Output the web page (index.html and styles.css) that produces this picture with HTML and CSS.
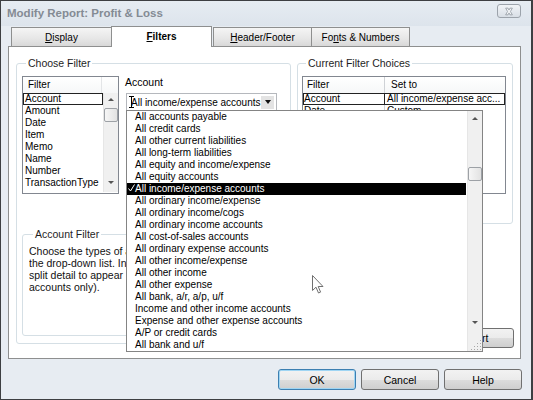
FILE: index.html
```html
<!DOCTYPE html>
<html lang="en">
<head>
  <meta charset="UTF-8" />
  <title>Modify Report: Profit &amp; Loss</title>
  <link rel="stylesheet" href="styles.css">
</head>
<body>
  <div class="window">
    <div class="titlebar">
      <span class="title">Modify Report: Profit &amp; Loss</span>
      <span class="close-btn">
        <svg width="23" height="13" viewBox="0 0 23 13">
          <path d="M8 3 L10.5 3 L11.5 5 L12.5 3 L15 3 L13 6.5 L15 10 L12.5 10 L11.5 8 L10.5 10 L8 10 L10 6.5 Z" fill="#f4f6f8" stroke="#8d949c" stroke-width="0.8"/>
        </svg>
      </span>
    </div>

    <div class="tabs">
      <div class="tab tab-display"><u>D</u>isplay</div>
      <div class="tab tab-filters active"><u>F</u>ilters</div>
      <div class="tab tab-header"><u>H</u>eader/Footer</div>
      <div class="tab tab-fonts">Fo<u>n</u>ts &amp; Numbers</div>
    </div>

    <div class="panel">
      <fieldset class="group choose-group">
        <legend>Choose Filter</legend>
        <div class="choose-row">
          <div class="listbox filter-list">
            <div class="list-head">
              <span class="head-cell">Filter</span>
              <span class="head-cell head-blank"></span>
            </div>
            <div class="list-body">
              <ul class="list-items">
                <li class="focused">Account</li>
                <li>Amount</li>
                <li>Date</li>
                <li>Item</li>
                <li>Memo</li>
                <li>Name</li>
                <li>Number</li>
                <li>TransactionType</li>
              </ul>
              <div class="vscroll small">
                <span class="arrow up"></span>
                <span class="thumb"></span>
                <span class="arrow down"></span>
              </div>
            </div>
          </div>

          <div class="account-field">
            <div class="field-label">Account</div>
            <div class="combo">
              <svg class="ibeam" width="5" height="12" viewBox="0 0 5 12"><path d="M0 0.5 H5 M2.5 0.5 V11.5 M0 11.5 H5" stroke="#000" stroke-width="1"/></svg>
              <span class="combo-text">All income/expense accounts</span>
              <span class="combo-btn"><span class="arrow down dark"></span></span>
            </div>
          </div>
        </div>

        <fieldset class="group filter-help">
          <legend>Account Filter</legend>
          <!-- the open drop-down hides the rest of this text -->
          <p class="help-text">Choose the types of accounts you want from<br>the drop-down list. Indicate whether you want<br>split detail to appear in the report (for all<br>accounts only).</p>
        </fieldset>
      </fieldset>

      <div class="right-col">
        <fieldset class="group current-group">
          <legend>Current Filter Choices</legend>
          <div class="listbox current-list">
            <div class="list-head">
              <span class="col-a">Filter</span>
              <span class="col-b">Set to</span>
            </div>
            <div class="crow selected">
              <span class="col-a">Account</span>
              <span class="col-b">All income/expense acc...</span>
            </div>
            <div class="crow">
              <span class="col-a">Date</span>
              <span class="col-b">Custom</span>
            </div>
          </div>
        </fieldset>
        <button class="btn revert-btn">Revert</button>
      </div>
    </div>

    <div class="footer">
      <button class="btn default-btn">OK</button>
      <button class="btn">Cancel</button>
      <button class="btn">Help</button>
    </div>

    <!-- open drop-down of the Account combo -->
    <div class="dropdown">
      <ul class="drop-items">
        <li>All accounts payable</li>
        <li>All credit cards</li>
        <li>All other current liabilities</li>
        <li>All long-term liabilities</li>
        <li>All equity and income/expense</li>
        <li>All equity accounts</li>
        <li class="checked"><svg class="check" width="7" height="8" viewBox="0 0 7 8"><path d="M0.5 4.5 L2.5 7 L6.5 0.5" fill="none" stroke="#fff" stroke-width="1"/></svg>All income/expense accounts</li>
        <li>All ordinary income/expense</li>
        <li>All ordinary income/cogs</li>
        <li>All ordinary income accounts</li>
        <li>All cost-of-sales accounts</li>
        <li>All ordinary expense accounts</li>
        <li>All other income/expense</li>
        <li>All other income</li>
        <li>All other expense</li>
        <li>All bank, a/r, a/p, u/f</li>
        <li>Income and other income accounts</li>
        <li>Expense and other expense accounts</li>
        <li>A/P or credit cards</li>
        <li>All bank and u/f</li>
      </ul>
      <div class="vscroll big">
        <span class="arrow up"></span>
        <span class="thumb"></span>
        <span class="arrow down"></span>
        <span class="grip"></span>
      </div>
    </div>

    <svg class="cursor" width="12" height="19" viewBox="0 0 12 19">
      <path d="M0.5 0.5 V15.5 L4 12.2 L6.5 18 L8.6 17.1 L6.2 11.5 H11 Z" fill="#fff" stroke="#707070" stroke-width="1"/>
    </svg>
  </div>
</body>
</html>
```

FILE: styles.css
```css
* {
  box-sizing: border-box;
}

body {
  margin: 0;
  width: 533px;
  height: 400px;
  overflow: hidden;
  font-family: "Liberation Sans", Arial, sans-serif;
  font-size: 10px;
  color: #000;
  background: #333;
}

.window {
  position: relative;
  width: 533px;
  height: 400px;
  border: 1px solid #3d3f42;
  border-right-width: 2px;
  background: #e7ecf2;
  display: flex;
  flex-direction: column;
}

/* title bar */
.titlebar {
  height: 25px;
  flex: 0 0 25px;
  display: flex;
  align-items: center;
  justify-content: space-between;
  padding: 0 10px 2px 6px;
  background: linear-gradient(#e6ecf2, #dde4ec);
}

.title {
  font-size: 11.5px;
  font-weight: bold;
  color: #848b94;
}

.close-btn {
  display: flex;
  width: 24px;
  height: 14px;
  margin-top: -3px;
  border: 1px solid #9ca3ab;
  border-radius: 3px;
  background: linear-gradient(#f1f4f7, #d9dfe6);
  align-items: center;
  justify-content: center;
}

/* tabs */
.tabs {
  height: 20px;
  flex: 0 0 20px;
  display: flex;
  align-items: flex-end;
  padding-left: 10px;
}

.tab {
  height: 19px;
  border: 1px solid #8e8f8f;
  border-bottom: none;
  border-right: none;
  background: linear-gradient(#f5f5f5, #e6e6e6 60%, #d8d8d8);
  display: flex;
  align-items: center;
  justify-content: center;
  padding-top: 1px;
}

.tab-display { width: 100px; }
.tab-filters { width: 101px; }
.tab-header { width: 98px; margin-left: 1px; }
.tab-fonts { width: 99px; border-right: 1px solid #8e8f8f; }

.tab.active {
  position: relative;
  z-index: 1;
  height: 21px;
  margin-bottom: -1px;
  background: #fff;
  border-right: 1px solid #8e8f8f;
  font-weight: bold;
  padding-bottom: 2px;
}

/* main panel */
.panel {
  flex: 0 0 313px;
  margin-left: 7px;
  width: 513px;
  background: #fff;
  border: 1px solid #8e8f8f;
  display: flex;
  padding: 10px 0 0 7px;
}

.group {
  margin: 0;
  border: 1px solid #d5dfe5;
  border-radius: 3px;
  padding: 0 5px;
  min-width: 0;
}

.group legend {
  padding: 0 2px;
  margin-left: 4px;
  line-height: 12px;
  font-size: 10.5px;
  color: #1e1e1e;
}

.choose-group {
  width: 275px;
  height: 287px;
}

.choose-row {
  display: flex;
  padding-top: 7px;
}

/* list boxes */
.listbox {
  border: 1px solid #828790;
  background: #fff;
}

.list-head {
  display: flex;
  height: 16px;
  background: linear-gradient(#fff, #f6f7f8);
  line-height: 16px;
}

.filter-list {
  width: 97px;
  height: 118px;
}

.filter-list .head-cell {
  width: 79px;
  padding-left: 5px;
  border-right: 1px solid #e3e5e7;
}

.filter-list .head-blank {
  flex: 1;
  border-right: none;
}

.list-body {
  display: flex;
  height: 99px;
}

.list-items {
  list-style: none;
  margin: 0;
  padding: 0;
  flex: 1;
}

.list-items li {
  height: 12px;
  line-height: 12px;
  padding-left: 2px;
}

.list-items li.focused {
  border: 1px solid #222;
  line-height: 10px;
  padding-left: 1px;
}

.vscroll {
  width: 15px;
  background: #f0f0f0;
  border-left: 1px solid #e6e6e6;
  display: flex;
  flex-direction: column;
  align-items: center;
}

.arrow {
  width: 0;
  height: 0;
  border-left: 3px solid transparent;
  border-right: 3px solid transparent;
}

.arrow.up {
  border-bottom: 3px solid #555;
}

.arrow.down {
  border-top: 3px solid #555;
}

.arrow.dark {
  border-top-color: #111;
}

.thumb {
  width: 14px;
  height: 14px;
  border: 1px solid #9da1a6;
  border-radius: 2px;
  background: linear-gradient(90deg, #f6f6f6, #e2e2e2);
}

.vscroll.small .arrow.up { margin-top: 5px; }
.vscroll.small .thumb { margin-top: 7px; }
.vscroll.small .arrow.down { margin-top: auto; margin-bottom: 8px; }

/* account combo */
.account-field {
  margin-left: 7px;
}

.field-label {
  line-height: 12px;
  margin-left: -1px;
  font-size: 10.5px;
}

.combo {
  margin-top: 5px;
  width: 151px;
  height: 18px;
  border: 1px solid #b5b8bd;
  display: flex;
  align-items: center;
  padding-left: 2px;
}

.ibeam {
  margin-right: -3px;
}

.combo-text {
  flex: 1;
}

.combo-btn {
  width: 13px;
  height: 13px;
  margin-right: 2px;
  background: #e3e3e3;
  display: flex;
  align-items: center;
  justify-content: center;
}

.combo-btn .arrow {
  border-left-width: 3.5px;
  border-right-width: 3.5px;
  border-top-width: 4px;
}

/* account filter help */
.filter-help {
  margin-top: 34px;
  width: 263px;
  height: 108px;
  padding: 0 6px;
}

.help-text {
  margin: 5px 0 0;
  width: 97px;
  overflow: hidden;
  line-height: 12px;
  font-size: 10.5px;
  white-space: nowrap;
  color: #111;
}

/* right column */
.right-col {
  margin-left: 6px;
  width: 216px;
  display: flex;
  flex-direction: column;
}

.current-group {
  height: 167px;
  padding: 0 5px 0 4px;
}

.current-list {
  margin-top: 7px;
  width: 204px;
  height: 118px;
}

.col-a {
  width: 82px;
  border-right: 1px solid #cfd2d6;
}

.col-b {
  flex: 1;
  white-space: nowrap;
  overflow: hidden;
}

.current-list .list-head .col-a { padding-left: 4px; }
.current-list .list-head .col-b { padding-left: 6px; }

.crow {
  display: flex;
  height: 12px;
  line-height: 12px;
}

.crow .col-a { padding-left: 1px; }
.crow .col-b { padding-left: 2px; }

.crow.selected {
  border: 1px solid #222;
  line-height: 10px;
}

.crow.selected .col-a {
  width: 81px;
  border-right-color: #222;
  padding-left: 0;
}

/* buttons */
.btn {
  font-family: "Liberation Sans", Arial, sans-serif;
  font-size: 10.5px;
  color: #000;
  height: 21px;
  border: 1px solid #707070;
  border-radius: 3px;
  background: linear-gradient(#f2f2f2, #ebebeb 50%, #dddddd 50%, #cfcfcf);
  padding: 0;
}

.revert-btn {
  margin-top: auto;
  margin-bottom: 10px;
  align-self: flex-end;
  width: 82px;
  height: 20px;
  margin-right: -1px;
}

.footer {
  flex: 1;
  display: flex;
  justify-content: flex-end;
  align-items: flex-start;
  gap: 5px;
  padding: 10px 9px 0 0;
}

.footer .btn {
  width: 78px;
}

.default-btn {
  border-color: #3c7fb1;
  box-shadow: inset 0 0 0 1px #9fd5f3;
}

/* open drop-down list */
.dropdown {
  position: absolute;
  left: 125px;
  top: 109px;
  width: 357px;
  height: 242px;
  border: 1px solid #848484;
  background: #fff;
  display: flex;
  z-index: 5;
}

.drop-items {
  list-style: none;
  margin: 0;
  padding: 0 1px 0 0;
  flex: 1;
}

.drop-items li {
  height: 12px;
  line-height: 12px;
  padding-left: 8px;
  white-space: nowrap;
}

.drop-items li.checked {
  background: #000;
  color: #fff;
  padding-left: 1px;
}

.vscroll.big .arrow.up { margin-top: 6px; }
.vscroll.big .thumb { margin-top: 47px; }
.vscroll.big .arrow.down { margin-top: auto; margin-bottom: 13px; }

.grip {
  width: 14px;
  height: 14px;
  background-image: radial-gradient(circle, #a8a8a8 0.8px, transparent 1px);
  background-size: 3px 3px;
  background-position: 2px 2px;
  clip-path: polygon(100% 0, 100% 100%, 0 100%);
}

.cursor {
  position: absolute;
  left: 311px;
  top: 274px;
  z-index: 6;
}
```
